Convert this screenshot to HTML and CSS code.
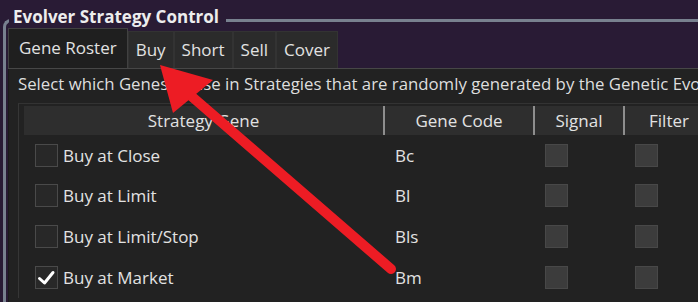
FILE: index.html
```html
<!DOCTYPE html>
<html>
<head>
  <meta charset="UTF-8">
  <title>Evolver Strategy Control</title>
  <link rel="stylesheet" href="styles.css">
</head>
<body>
  <fieldset class="group">
    <legend>Evolver Strategy Control</legend>

    <!-- Tab strip -->
    <div class="tabs">
      <div class="tab active">Gene Roster</div>
      <div class="tab">Buy</div>
      <div class="tab">Short</div>
      <div class="tab">Sell</div>
      <div class="tab">Cover</div>
    </div>

    <!-- Gene Roster page -->
    <div class="panel">
      <p class="hint">Select which Genes to use in Strategies that are randomly generated by the Genetic Evolver.</p>
      <div class="grid">
        <div class="row head">
          <div class="cell">Strategy Gene</div>
          <div class="cell">Gene Code</div>
          <div class="cell">Signal</div>
          <div class="cell">Filter</div>
        </div>
        <div class="row">
          <div class="cell name"><span class="box"></span>Buy at Close</div>
          <div class="cell">Bc</div>
          <div class="cell"><span class="box off"></span></div>
          <div class="cell"><span class="box off"></span></div>
        </div>
        <div class="row">
          <div class="cell name"><span class="box"></span>Buy at Limit</div>
          <div class="cell">Bl</div>
          <div class="cell"><span class="box off"></span></div>
          <div class="cell"><span class="box off"></span></div>
        </div>
        <div class="row">
          <div class="cell name"><span class="box"></span>Buy at Limit/Stop</div>
          <div class="cell">Bls</div>
          <div class="cell"><span class="box off"></span></div>
          <div class="cell"><span class="box off"></span></div>
        </div>
        <div class="row">
          <div class="cell name">
            <span class="box">
              <svg width="21" height="21" viewBox="0 0 21 21"><path d="M3.5 11.5 L8.5 16 L17 5.5" fill="none" stroke="#fff" stroke-width="3" stroke-linecap="round" stroke-linejoin="round"/></svg>
            </span>Buy at Market
          </div>
          <div class="cell">Bm</div>
          <div class="cell"><span class="box off"></span></div>
          <div class="cell"><span class="box off"></span></div>
        </div>
      </div>
    </div>
  </fieldset>

  <!-- Red annotation arrow over the screenshot -->
  <svg class="arrow" width="698" height="302" viewBox="0 0 698 302">
    <line x1="391" y1="269" x2="190" y2="95" stroke="#ed1c24" stroke-width="10" stroke-linecap="round"/>
    <polygon points="160,65 173,113 213,80" fill="#ed1c24"/>
  </svg>
</body>
</html>
```

FILE: styles.css
```css
/* Page: dark purple window background */
body {
  margin: 0;
  width: 698px;
  height: 302px;
  overflow: hidden;
  position: relative;
  background: #291b35;
  font-family: "Open Sans", "Noto Sans", sans-serif;
  color: #e2e2e2;
}
/* Group box with title */
.group {
  margin: 12px 0 0 3px;
  padding: 0 0 0 2px;
  width: 740px;
  height: 420px;
  box-sizing: border-box;
  border: 3px solid #78818f;
  border-right: none;
  border-bottom: none;
  border-radius: 8px 0 0 0;
  min-width: 0;
}
.group legend {
  font-weight: bold;
  font-size: 17px;
  line-height: 10px;
  color: #ededed;
  padding: 0 7px 6px 4px;
  margin-left: 1px;
}
/* Tabs */
.tabs {
  display: flex;
  align-items: flex-end;
  height: 40px;
  border-bottom: 1px solid #474747;
}
.tab {
  height: 37px;
  box-sizing: border-box;
  padding: 0 7px;
  background: #2b2b2b;
  border: 1px solid #333;
  border-bottom: none;
  font-size: 17px;
  line-height: 35px;
  color: #e2e2e2;
}
.tab.active {
  height: 40px;
  padding: 0 10px;
  background: #1f1f1f;
  border-color: #414141;
  line-height: 37px;
}
/* Tab page */
.panel {
  background: #222;
  border-left: 1px solid #1b1b1b;
  height: 300px;
}
.hint {
  margin: 0;
  padding: 3px 0 0 9px;
  font-size: 16.8px;
  line-height: 24px;
  white-space: nowrap;
  overflow: hidden;
  color: #dedede;
}
/* Gene grid */
.grid {
  margin: 7px 0 0 9px;
  padding: 2px 0 0 5px;
  border-left: 1px solid #363636;
  border-top: 1px solid #333;
}
.row {
  display: grid;
  grid-template-columns: 359px 150px 90px 90px;
  height: 40.67px;
  align-items: center;
  font-size: 17px;
}
.row .cell {
  padding-left: 12px;
  display: flex;
  align-items: center;
  white-space: nowrap;
}
.row .cell.name {
  padding-left: 11px;
  gap: 5px;
}
.row.head {
  height: 29px;
  background: #2e2e2e;
  align-items: stretch;
}
.row.head .cell {
  padding: 0;
  justify-content: center;
  line-height: 29px;
}
.row.head .cell + .cell {
  border-left: 2px solid #8e8e8e;
}
/* Check boxes */
.box {
  width: 23px;
  height: 23px;
  box-sizing: border-box;
  border: 1px solid #4a4a4a;
  background: #282828;
  display: inline-block;
  flex: none;
}
.box svg {
  display: block;
}
.box.off {
  background: #3c3c3c;
  border-color: #484848;
}
/* Annotation arrow */
.arrow {
  position: absolute;
  top: 0;
  left: 0;
  pointer-events: none;
}
```
